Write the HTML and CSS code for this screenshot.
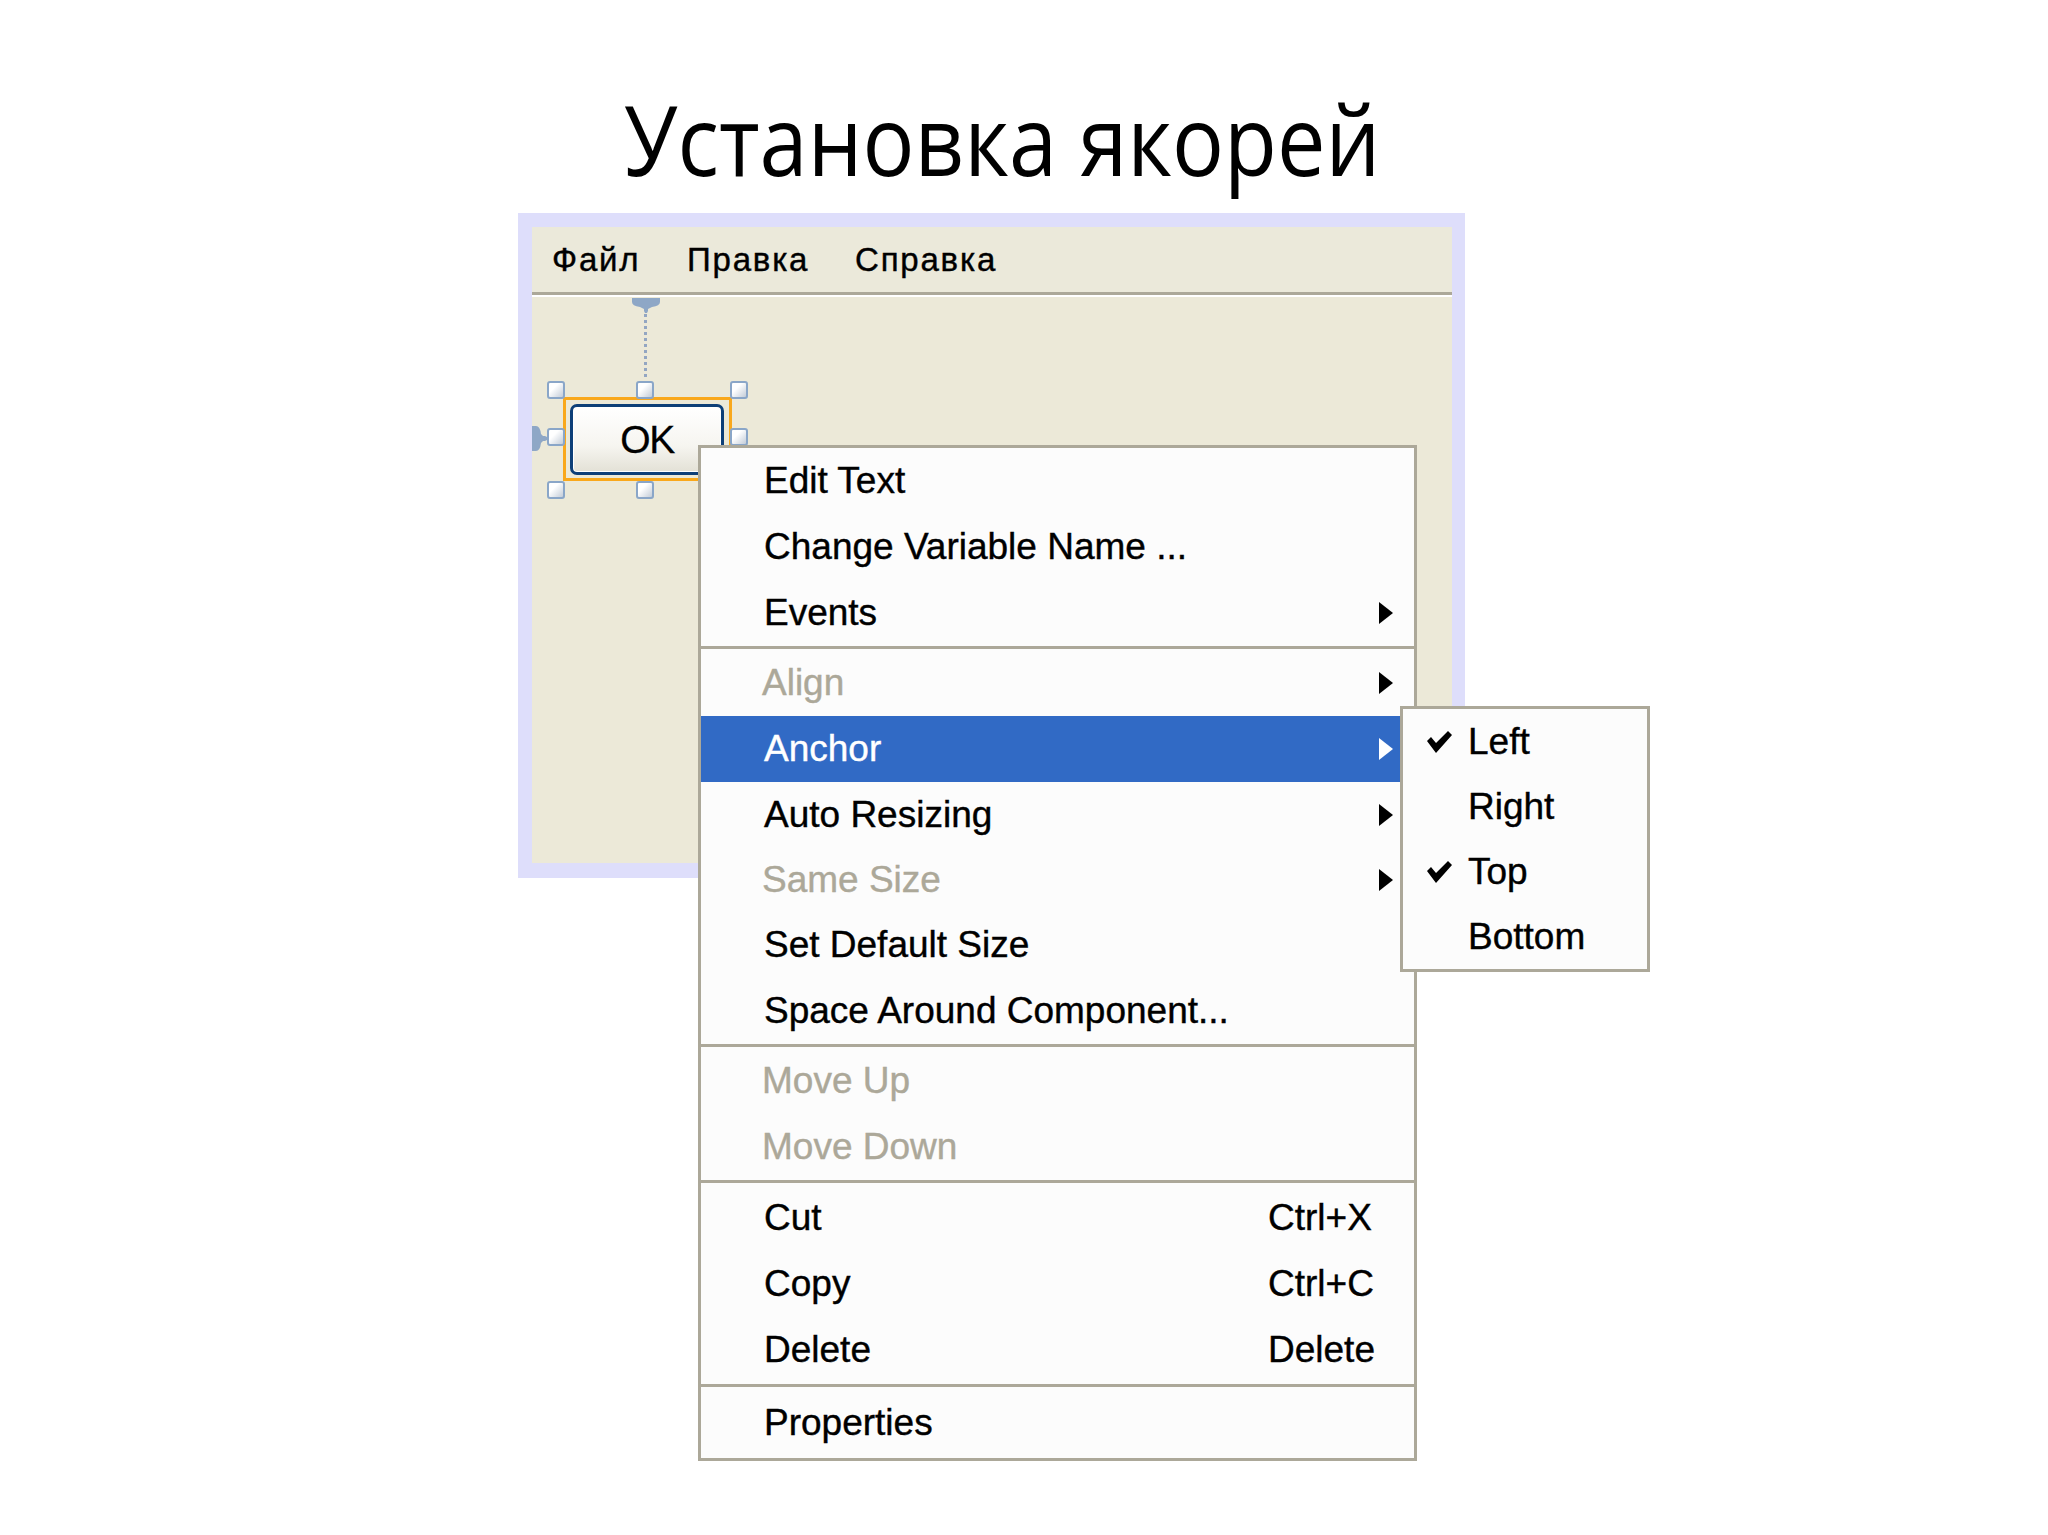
FILE: index.html
```html
<!DOCTYPE html>
<html lang="ru">
<head>
<meta charset="utf-8">
<title>Установка якорей</title>
<link rel="stylesheet" href="styles.css">
</head>
<body>
<div class="page">
<h1 class="title"><span class="title-text">Установка якорей</span></h1>
<div class="window">
  <div class="inner">
    <div class="menubar">
      <span class="mb-item mb-file">Файл</span>
      <span class="mb-item mb-edit">Правка</span>
      <span class="mb-item">Справка</span>
    </div>
    <div class="canvas">
      <svg class="anchor-top" width="28" height="15" viewBox="0 0 28 15"><path d="M0 0H28V4Q28 8 20 9L16 11V13L15 15H13L12 13V11L8 9Q0 8 0 4Z" fill="#8ea7c6"/></svg>
      <div class="anchor-line"></div>
      <svg class="anchor-left" width="15" height="25" viewBox="0 0 15 25"><path d="M0 0H4Q8 0 9 8L11 10H13L15 11V14L13 15H11L9 17Q8 25 4 25H0Z" fill="#8ea7c6"/></svg>
      <div class="selection"></div>
      <div class="button">OK</div>
      <div class="handle h-tl"></div>
      <div class="handle h-tm"></div>
      <div class="handle h-tr"></div>
      <div class="handle h-ml"></div>
      <div class="handle h-mr"></div>
      <div class="handle h-bl"></div>
      <div class="handle h-bm"></div>
      <div class="handle h-br"></div>
    </div>
  </div>

  <div class="ctx-menu">
    <div class="item"><span class="label">Edit Text</span></div>
    <div class="item"><span class="label">Change Variable Name ...</span></div>
    <div class="item"><span class="label">Events</span><svg class="arrow" width="14" height="22" viewBox="0 0 14 22"><path d="M0 0L14 11L0 22Z"/></svg></div>
    <div class="sep sep-a"></div>
    <div class="item disabled"><span class="label">Align</span><svg class="arrow" width="14" height="22" viewBox="0 0 14 22"><path d="M0 0L14 11L0 22Z"/></svg></div>
    <div class="item active"><span class="label">Anchor</span><svg class="arrow" width="14" height="22" viewBox="0 0 14 22"><path d="M0 0L14 11L0 22Z"/></svg></div>
    <div class="item"><span class="label">Auto Resizing</span><svg class="arrow" width="14" height="22" viewBox="0 0 14 22"><path d="M0 0L14 11L0 22Z"/></svg></div>
    <div class="item disabled short"><span class="label">Same Size</span><svg class="arrow" width="14" height="22" viewBox="0 0 14 22"><path d="M0 0L14 11L0 22Z"/></svg></div>
    <div class="item"><span class="label">Set Default Size</span></div>
    <div class="item"><span class="label">Space Around Component...</span></div>
    <div class="sep"></div>
    <div class="item disabled"><span class="label">Move Up</span></div>
    <div class="item disabled"><span class="label">Move Down</span></div>
    <div class="sep sep-c"></div>
    <div class="item"><span class="label">Cut</span><span class="shortcut">Ctrl+X</span></div>
    <div class="item"><span class="label">Copy</span><span class="shortcut">Ctrl+C</span></div>
    <div class="item"><span class="label">Delete</span><span class="shortcut">Delete</span></div>
    <div class="sep sep-b"></div>
    <div class="item last"><span class="label">Properties</span></div>
  </div>

  <div class="submenu">
    <div class="sub-item"><svg class="check" width="25" height="23" viewBox="0 0 25 23"><path d="M0 10L4 6L9 12L21 0L25 4L9 22Z"/></svg><span>Left</span></div>
    <div class="sub-item"><span>Right</span></div>
    <div class="sub-item"><svg class="check" width="25" height="23" viewBox="0 0 25 23"><path d="M0 10L4 6L9 12L21 0L25 4L9 22Z"/></svg><span>Top</span></div>
    <div class="sub-item"><span>Bottom</span></div>
  </div>
</div>
</div>
</body>
</html>
```
FILE: styles.css
```css
html, body {
  margin: 0;
  padding: 0;
  background: #ffffff;
}

body {
  font-family: "Liberation Sans", Arial, sans-serif;
  color: #000;
}

.page {
  min-height: 1535px;
}

.title {
  margin: 0;
  padding: 80px 0 0 624px;
  font-family: "Open Sans", "Noto Sans", sans-serif;
  font-weight: 400;
  font-size: 97px;
  line-height: 1.2;
  white-space: nowrap;
}

.title-text {
  display: inline-block;
  transform: scaleX(0.892);
  transform-origin: 0 50%;
}

.window {
  position: relative;
  margin: 17px 0 0 518px;
  width: 947px;
  height: 665px;
  box-sizing: border-box;
  padding: 14px 13px 15px 14px;
  background: #dedefb;
}

.inner {
  height: 100%;
  display: flex;
  flex-direction: column;
  background: #ece9d8;
}

.menubar {
  height: 65px;
  line-height: 65px;
  display: flex;
  padding-left: 20px;
  font-size: 33px;
  letter-spacing: 1.8px;
  -webkit-text-stroke: 0.4px #000;
  background: #ebe9da;
  border-bottom: 3px solid #aca899;
  white-space: nowrap;
}

.mb-item { display: block; }
.mb-file { width: 135px; }
.mb-edit { width: 168px; }

.canvas {
  position: relative;
  flex: 1;
  border-top: 2px solid #ffffff;
}

.anchor-top {
  position: absolute;
  left: 100px;
  top: 1px;
}

.anchor-line {
  position: absolute;
  left: 112px;
  top: 17px;
  height: 63px;
  border-left: 3px dotted #93a6c2;
}

.anchor-left {
  position: absolute;
  left: 0;
  top: 129px;
}

.selection {
  position: absolute;
  left: 31px;
  top: 100px;
  width: 169px;
  height: 84px;
  box-sizing: border-box;
  border: 3px solid #f9a81c;
}

.button {
  position: absolute;
  left: 38px;
  top: 107px;
  width: 154px;
  height: 71px;
  box-sizing: border-box;
  border: 3px solid #0d3f78;
  border-radius: 7px;
  background: linear-gradient(180deg, #ffffff 0%, #f6f5f0 60%, #e3e1d6 100%);
  box-shadow: inset 0 0 0 1px #ffffff;
  font-size: 39px;
  line-height: 65px;
  text-align: center;
  letter-spacing: -1.5px;
  -webkit-text-stroke: 0.3px #000;
}

.handle {
  position: absolute;
  width: 14px;
  height: 14px;
  border: 2px solid #8aa6c8;
  border-radius: 3px;
  background: linear-gradient(135deg, #ffffff 35%, #c3ccd8 100%);
}

.h-tl { left: 15px; top: 84px; }
.h-tm { left: 104px; top: 84px; }
.h-tr { left: 198px; top: 84px; }
.h-ml { left: 15px; top: 131px; }
.h-mr { left: 198px; top: 131px; }
.h-bl { left: 15px; top: 184px; }
.h-bm { left: 104px; top: 184px; }
.h-br { left: 198px; top: 184px; }

.ctx-menu {
  position: absolute;
  left: 180px;
  top: 232px;
  width: 719px;
  box-sizing: border-box;
  border: 3px solid #aca899;
  background: #fcfcfc;
  font-size: 37px;
  -webkit-text-stroke: 0.4px currentColor;
  z-index: 2;
}

.item {
  height: 66px;
  line-height: 66px;
  display: flex;
  align-items: center;
  padding: 0 21px 0 63px;
  white-space: nowrap;
}

.item.short { height: 64px; }
.item.last { height: 69px; padding-bottom: 2px; box-sizing: border-box; }

.item .label { flex: 1; }

.item .shortcut {
  width: 125px;
}

.item .arrow { fill: #000; }

.item.disabled { color: #aca899; }
.item.disabled .label { margin-left: -2px; }

.item.active {
  background: #316ac5;
  color: #ffffff;
}

.item.active .arrow { fill: #ffffff; }

.sep {
  height: 3px;
  margin: 0 0 1px;
  background: #aca899;
}

.sep-a { margin: 0 0 1px; }
.sep-c { margin: 0 0 2px; }
.sep-b { margin: 1px 0 2px; }

.submenu {
  position: absolute;
  left: 882px;
  top: 493px;
  width: 250px;
  box-sizing: border-box;
  border: 3px solid #aca899;
  background: #fcfcfc;
  font-size: 37px;
  -webkit-text-stroke: 0.4px #000;
  z-index: 3;
}

.sub-item {
  position: relative;
  height: 65px;
  line-height: 65px;
  padding-left: 65px;
  white-space: nowrap;
}

.sub-item .check {
  position: absolute;
  left: 24px;
  top: 22px;
  fill: #000;
}
```
